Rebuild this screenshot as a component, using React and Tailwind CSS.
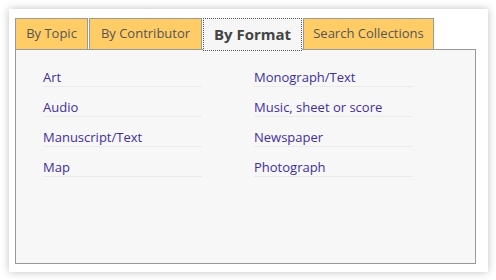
const tabs = [
  { label: 'By Topic', w: 'w-[73px]' },
  { label: 'By Contributor', w: 'w-[113px]' },
  { label: 'By Format', w: 'w-[99px]', active: true },
  { label: 'Search Collections', w: 'w-[131px]' },
];

const left = ['Art', 'Audio', 'Manuscript/Text', 'Map'];
const right = ['Monograph/Text', 'Music, sheet or score', 'Newspaper', 'Photograph'];

const Column = ({ items }) => (
  <ul className="w-[159px]">
    {items.map((item) => (
      <li key={item} className="h-[30px] flex items-end border-b border-[#ebebeb]">
        <a href="#" className="text-[13px] leading-[18px] text-[#3f2f9c]">{item}</a>
      </li>
    ))}
  </ul>
);

export default function App() {
  return (
    <div className="w-[496px] h-[280px] bg-white p-[9px] font-['Segoe_UI','Open_Sans',sans-serif]">
      <div className="w-[479px] h-[263px] bg-white shadow-[0_0_8px_rgba(0,0,0,0.25)] px-[6px] pt-[9px]">
        <div className="flex gap-[1px] h-[31px] items-end relative z-10">
          {tabs.map((t) =>
            t.active ? (
              <div
                key={t.label}
                className={`${t.w} h-[33px] mb-[-2px] bg-[#f6f6f6] border border-dotted border-[#555] flex items-center justify-center text-[15px] font-bold text-[#444]`}
              >
                {t.label}
              </div>
            ) : (
              <div
                key={t.label}
                className={`${t.w} h-[31px] bg-[#ffcc66] border border-b-0 border-[#999] flex items-center justify-center text-[13px] text-[#555]`}
              >
                {t.label}
              </div>
            )
          )}
        </div>
        <div className="w-[461px] h-[215px] bg-[#f7f7f7] border border-[#999] pl-[27px] pt-[7px] flex gap-[52px]">
          <Column items={left} />
          <Column items={right} />
        </div>
      </div>
    </div>
  );
}
